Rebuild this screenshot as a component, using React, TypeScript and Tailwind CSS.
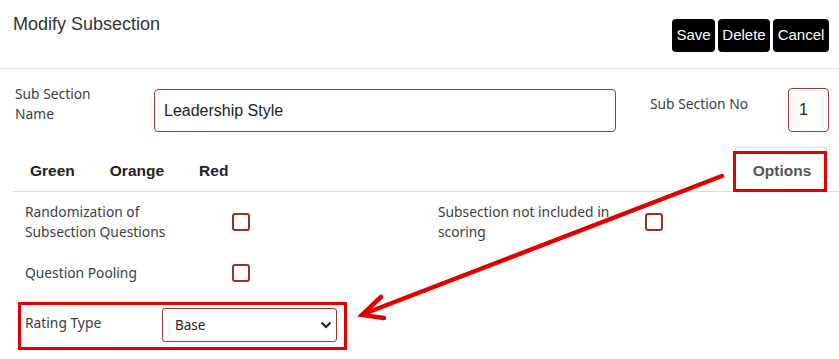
import React from "react";

const LABEL = "text-[13.8px] leading-[20px] text-[#3a3d42] [font-family:'Noto_Sans',sans-serif]";

function Check() {
  return <span className="block h-[18px] w-[18px] shrink-0 rounded-[3px] border-2 border-[#98321f] bg-white" />;
}

function OptionRow({ label }: { label: React.ReactNode }) {
  return (
    <div className="flex w-[413px] shrink-0 items-center">
      <div className={`w-[207px] ${LABEL}`}>{label}</div>
      <Check />
    </div>
  );
}

const BUTTONS = [
  { label: "Save", w: "w-[43px]" },
  { label: "Delete", w: "w-[52px]" },
  { label: "Cancel", w: "w-[56px]" },
];

export default function App() {
  return (
    <div className="relative h-[359px] w-[839px] overflow-hidden bg-white [font-family:'Liberation_Sans',Arial,sans-serif]">
      {/* Header */}
      <div className="flex h-[69px] items-start justify-between border-b border-[#e5e5e5]">
        <h1 className="pl-[13px] pt-[12px] text-[18px] leading-[24px] text-[#333]">Modify Subsection</h1>
        <div className="mr-[10px] mt-[19px] flex gap-[3px]">
          {BUTTONS.map((b) => (
            <button
              key={b.label}
              type="button"
              className={`h-[33px] rounded-[4px] bg-black text-center text-[15px] text-white ${b.w}`}
            >
              {b.label}
            </button>
          ))}
        </div>
      </div>

      {/* Name / number row */}
      <div className="flex items-start pt-[20px]">
        <div className={`mt-[-5px] w-[154px] pl-[15px] ${LABEL}`}>
          Sub Section
          <br />
          Name
        </div>
        <div className="flex h-[43px] w-[462px] items-center rounded-[4px] border border-[#9e3a2b] pl-[9px] text-[16px] text-[#222]">
          Leadership Style
        </div>
        <div className={`ml-[34px] mt-[5px] ${LABEL}`}>Sub Section No</div>
        <div className="ml-auto mr-[10px] mt-[-1px] flex h-[44px] w-[41px] items-center rounded-[4px] border border-[#9e3a2b] pl-[10px] text-[16px] text-[#222]">
          1
        </div>
      </div>

      {/* Tabs */}
      <div className="ml-[13px] mt-[15px] flex h-[45px] items-stretch border-b border-[#ddd] text-[15.5px] font-bold">
        <div className="flex gap-[35px] pl-[17px] pt-[4px]">
          <span className="self-center text-[#222]">Green</span>
          <span className="self-center text-[#222]">Orange</span>
          <span className="self-center text-[#222]">Red</span>
        </div>
        <div className="relative mb-[-1px] ml-auto mr-[12px] flex w-[92px] items-center justify-center border border-b-0 border-[#ddd] bg-white text-[#555]">
          <span className="pl-[2px] pt-[2px]">Options</span>
          <span className="absolute -left-[3px] top-[3px] -right-[1px] bottom-0 border-[3px] border-[#e00000]" />
        </div>
      </div>

      {/* Options content */}
      <div className="pl-[25px] pt-[10px]">
        <div className="flex">
          <OptionRow
            label={
              <>
                Randomization of
                <br />
                Subsection Questions
              </>
            }
          />
          <OptionRow
            label={
              <>
                Subsection not included in
                <br />
                scoring
              </>
            }
          />
        </div>
        <div className="mt-[21px] flex">
          <OptionRow label="Question Pooling" />
        </div>
      </div>

      <div className="ml-[18px] mt-[19px] flex h-[48px] w-[329px] items-start border-[3px] border-[#e00000]">
        <div className={`w-[141px] pl-[4px] pt-[8px] ${LABEL}`}>Rating Type</div>
        <div className="mt-[3px] flex h-[34px] w-[175px] items-center justify-between rounded-[3px] border border-[#9e3a2b] pl-[12px] pr-[4px] text-[13.5px] text-[#222] [font-family:'Noto_Sans',sans-serif]">
          Base
          <svg viewBox="0 0 12 8" className="h-[8px] w-[12px]">
            <path d="M1.5 1.5l4.5 4.5 4.5-4.5" fill="none" stroke="#222" strokeWidth="2.2" />
          </svg>
        </div>
      </div>

      {/* Annotation arrow */}
      <svg className="pointer-events-none absolute left-0 top-0" width="839" height="359" viewBox="0 0 839 359">
        <line x1="722" y1="176" x2="366" y2="313" stroke="#e00000" strokeWidth="4.5" strokeLinecap="round" />
        <polyline
          points="381,297 362,315 384,318"
          fill="none"
          stroke="#e00000"
          strokeWidth="4.5"
          strokeLinecap="round"
          strokeLinejoin="miter"
        />
      </svg>
    </div>
  );
}
